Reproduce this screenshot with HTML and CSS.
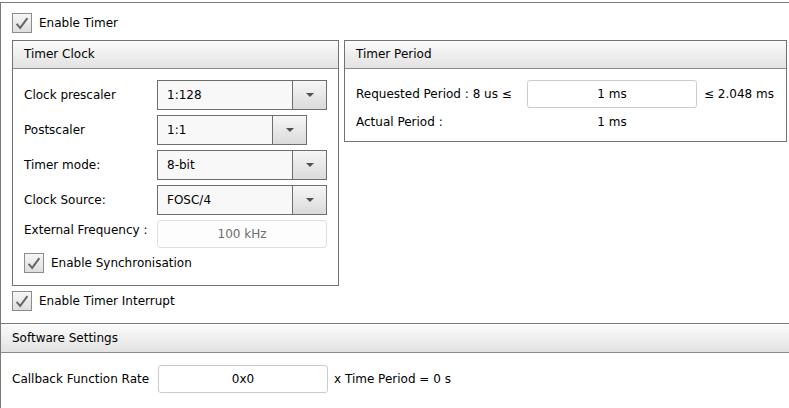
FILE: index.html
```html
<!DOCTYPE html>
<html>
<head>
<meta charset="utf-8">
<link rel="stylesheet" href="styles.css">
</head>
<body>
<div class="page">
  <div class="top">
    <div class="check-row">
      <span class="checkbox"><svg viewBox="0 0 20 20" width="18" height="18"><path d="M4 11 L8 15.5 L16 4.5" fill="none" stroke="#666" stroke-width="2.2"/></svg></span>
      <span>Enable Timer</span>
    </div>
    <div class="panels">
      <div class="panel clock">
        <div class="panel-head">Timer Clock</div>
        <div class="panel-body">
          <div class="form-row">
            <span class="label">Clock prescaler</span>
            <div class="combo"><span class="combo-text">1:128</span><span class="combo-btn"><i class="arrow"></i></span></div>
          </div>
          <div class="form-row">
            <span class="label">Postscaler</span>
            <div class="combo narrow"><span class="combo-text">1:1</span><span class="combo-btn"><i class="arrow"></i></span></div>
          </div>
          <div class="form-row">
            <span class="label">Timer mode:</span>
            <div class="combo"><span class="combo-text">8-bit</span><span class="combo-btn"><i class="arrow"></i></span></div>
          </div>
          <div class="form-row">
            <span class="label">Clock Source:</span>
            <div class="combo"><span class="combo-text">FOSC/4</span><span class="combo-btn"><i class="arrow"></i></span></div>
          </div>
          <div class="form-row short">
            <span class="label top-label">External Frequency :</span>
            <div class="field disabled">100 kHz</div>
          </div>
          <div class="check-row">
            <span class="checkbox"><svg viewBox="0 0 20 20" width="18" height="18"><path d="M4 11 L8 15.5 L16 4.5" fill="none" stroke="#666" stroke-width="2.2"/></svg></span>
            <span>Enable Synchronisation</span>
          </div>
        </div>
      </div>
      <div class="panel period">
        <div class="panel-head">Timer Period</div>
        <div class="panel-body">
          <div class="period-row">
            <span class="plabel">Requested Period : 8 us ≤</span>
            <div class="field">1 ms</div>
            <span class="after">≤ 2.048 ms</span>
          </div>
          <div class="period-row actual">
            <span class="plabel">Actual Period :</span>
            <span class="value">1 ms</span>
          </div>
        </div>
      </div>
    </div>
    <div class="check-row interrupt">
      <span class="checkbox"><svg viewBox="0 0 20 20" width="18" height="18"><path d="M4 11 L8 15.5 L16 4.5" fill="none" stroke="#666" stroke-width="2.2"/></svg></span>
      <span>Enable Timer Interrupt</span>
    </div>
  </div>
  <div class="section-head">Software Settings</div>
  <div class="callback-row">
    <span class="clabel">Callback Function Rate</span>
    <div class="field">0x0</div>
    <span class="after">x Time Period = 0 s</span>
  </div>
</div>
</body>
</html>
```

FILE: styles.css
```css
html, body {
  margin: 0;
  padding: 0;
  background: #fff;
}
body {
  font-family: "DejaVu Sans", sans-serif;
  font-size: 12px;
  color: #000;
  width: 789px;
  height: 408px;
  overflow: hidden;
}
.page {
  margin-top: 2px;
  border-top: 1px solid #7a7a7a;
  border-left: 1px solid #7a7a7a;
  height: 406px;
  box-sizing: border-box;
}
.top {
  height: 320px;
  box-sizing: border-box;
  padding: 10px 0 0 11px;
}
.check-row {
  display: flex;
  align-items: center;
  gap: 7px;
  height: 20px;
}
.checkbox {
  width: 20px;
  height: 20px;
  box-sizing: border-box;
  border: 1px solid #8c8c8c;
  background: linear-gradient(#f6f6f6, #dedede);
  display: flex;
  align-items: center;
  justify-content: center;
}
.panels {
  display: flex;
  align-items: flex-start;
  gap: 5px;
  margin-top: 7px;
}
.panel {
  border: 1px solid #727272;
  box-sizing: border-box;
}
.panel.clock {
  width: 327px;
  height: 246px;
}
.panel.period {
  width: 443px;
  height: 102px;
}
.panel-head {
  height: 28px;
  box-sizing: border-box;
  border-bottom: 1px solid #8a8a8a;
  background: linear-gradient(#fbfbfb, #e2e2e2);
  line-height: 27px;
  padding-left: 11px;
}
.panel-body {
  padding: 11px 11px 0 11px;
}
.form-row {
  display: flex;
  align-items: center;
  height: 30px;
  margin-bottom: 5px;
}
.form-row.short {
  height: 28px;
  align-items: flex-start;
}
.label {
  width: 133px;
  flex: none;
}
.top-label {
  line-height: 14px;
  padding-top: 3px;
}
.combo {
  width: 170px;
  height: 30px;
  box-sizing: border-box;
  border: 1px solid #6e6e6e;
  display: flex;
}
.combo.narrow {
  width: 150px;
}
.combo-text {
  flex: 1;
  background: #f8f8f8;
  line-height: 28px;
  padding-left: 9px;
}
.combo-btn {
  width: 33px;
  border-left: 1px solid #6e6e6e;
  background: linear-gradient(#f6f6f6, #dadada);
  display: flex;
  align-items: center;
  justify-content: center;
}
.arrow {
  width: 0;
  height: 0;
  border-left: 4px solid transparent;
  border-right: 4px solid transparent;
  border-top: 4px solid #505050;
}
.field {
  width: 170px;
  height: 28px;
  box-sizing: border-box;
  border: 1px solid #cbcbcb;
  border-radius: 3px;
  background: #fff;
  text-align: center;
  line-height: 26px;
  flex: none;
}
.field.disabled {
  border-color: #dedede;
  color: #6e6e6e;
  background: #fdfdfd;
}
.period-row {
  display: flex;
  align-items: center;
  height: 28px;
}
.period-row.actual {
  height: 20px;
  margin-top: 4px;
}
.plabel {
  width: 171px;
  flex: none;
}
.value {
  width: 170px;
  text-align: center;
}
.after {
  margin-left: 7px;
}
.interrupt {
  margin-top: 5px;
}
.section-head {
  height: 30px;
  box-sizing: border-box;
  border-top: 1px solid #7a7a7a;
  border-bottom: 1px solid #8a8a8a;
  background: linear-gradient(#fbfbfb, #e2e2e2);
  line-height: 28px;
  padding-left: 11px;
}
.callback-row {
  display: flex;
  align-items: center;
  margin-top: 12px;
  padding-left: 11px;
  height: 28px;
}
.clabel {
  width: 146px;
  flex: none;
}
.callback-row .after {
  margin-left: 6px;
}
```
